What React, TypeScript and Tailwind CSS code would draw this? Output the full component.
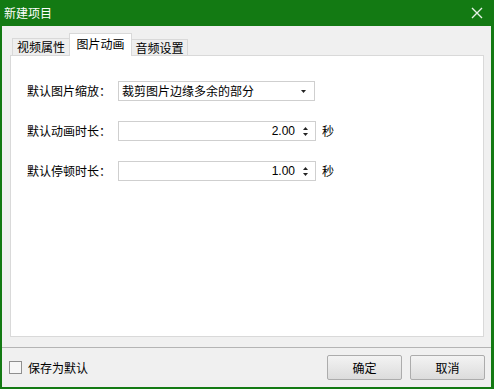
import React from "react";

const cjk = { fontFamily: '"Noto Sans CJK SC", "Noto Sans", sans-serif' };

function Spin({ value }: { value: string }) {
  return (
    <div className="w-[198px] h-[20px] border border-[#cfcfcf] bg-white flex items-center">
      <span className="flex-1 text-right pr-[4px] text-[12px] text-black leading-none" style={{ fontFamily: '"Liberation Sans", Arial, sans-serif' }}>{value}</span>
      <div className="w-[16px] h-full flex flex-col items-center justify-center gap-[3px] pr-[4px]">
        <svg width="5" height="3" viewBox="0 0 5 3"><path d="M2.5 0 L5 3 L0 3 Z" fill="#222" /></svg>
        <svg width="5" height="3" viewBox="0 0 5 3"><path d="M0 0 L5 0 L2.5 3 Z" fill="#222" /></svg>
      </div>
    </div>
  );
}

export default function App() {
  return (
    <div className="w-[494px] h-[389px] bg-[#137a13] flex flex-col pl-[2px] pr-[3px] pb-[2px] text-[12px] text-black" style={cjk}>
      <div className="h-[26px] shrink-0 flex items-center justify-between pl-[2px] pr-[8px] text-white">
        <span className="leading-none">新建项目</span>
        <svg width="12" height="12" viewBox="0 0 12 12">
          <path d="M1 1 L11 11 M11 1 L1 11" stroke="#e6f2e6" strokeWidth="1.4" />
        </svg>
      </div>
      <div className="flex-1 bg-[#f0f0f0] flex flex-col">
        <div className="pt-[7px] pl-[8px] pr-[7px]">
          <div className="h-[22px] flex items-end pl-[2px] relative z-10">
            <div className="w-[58px] h-[17px] border border-b-0 border-[#d9d9d9] bg-[#eeeeee] flex items-center justify-center">
              <span className="leading-none">视频属性</span>
            </div>
            <div className="w-[63px] h-[23px] -ml-[1px] -mb-[1px] border border-b-0 border-[#d9d9d9] bg-white flex items-center justify-center pb-[2px]">
              <span className="leading-none">图片动画</span>
            </div>
            <div className="w-[57px] h-[16px] -ml-[1px] border border-b-0 border-[#d9d9d9] bg-[#eeeeee] flex items-center justify-center">
              <span className="leading-none">音频设置</span>
            </div>
          </div>
          <div className="h-[282px] border border-[#d9d9d9] bg-white pt-[25px] pl-[16px] flex flex-col gap-[20px]">
            <div className="flex items-center h-[20px]">
              <span className="w-[91px] leading-none">默认图片缩放：</span>
              <div className="w-[197px] h-[20px] border border-[#cfcfcf] bg-white flex items-center justify-between pl-[3px] pr-[8px]">
                <span className="leading-none">裁剪图片边缘多余的部分</span>
                <svg width="5" height="3" viewBox="0 0 5 3"><path d="M0 0 L5 0 L2.5 3 Z" fill="#222" /></svg>
              </div>
            </div>
            <div className="flex items-center h-[20px]">
              <span className="w-[91px] leading-none">默认动画时长：</span>
              <Spin value="2.00" />
              <span className="ml-[6px] leading-none">秒</span>
            </div>
            <div className="flex items-center h-[20px]">
              <span className="w-[91px] leading-none">默认停顿时长：</span>
              <Spin value="1.00" />
              <span className="ml-[6px] leading-none">秒</span>
            </div>
          </div>
        </div>
        <div className="mt-[10px] h-[1px] bg-[#b4b4b4]" />
        <div className="flex-1 flex items-start justify-between pt-[7px] pl-[7px] pr-[6px]">
          <div className="flex items-center h-[25px] gap-[6px]">
            <div className="w-[13px] h-[13px] border border-[#8f8f8f] bg-[#f7f7f7]" />
            <span className="leading-none">保存为默认</span>
          </div>
          <div className="flex gap-[8px]">
            <button className="w-[75px] h-[25px] border border-[#acacac] rounded-[2px] bg-gradient-to-b from-[#f3f3f3] to-[#dcdcdc] flex items-center justify-center">
              <span className="leading-none">确定</span>
            </button>
            <button className="w-[75px] h-[25px] border border-[#acacac] rounded-[2px] bg-gradient-to-b from-[#f3f3f3] to-[#dcdcdc] flex items-center justify-center">
              <span className="leading-none">取消</span>
            </button>
          </div>
        </div>
      </div>
    </div>
  );
}
